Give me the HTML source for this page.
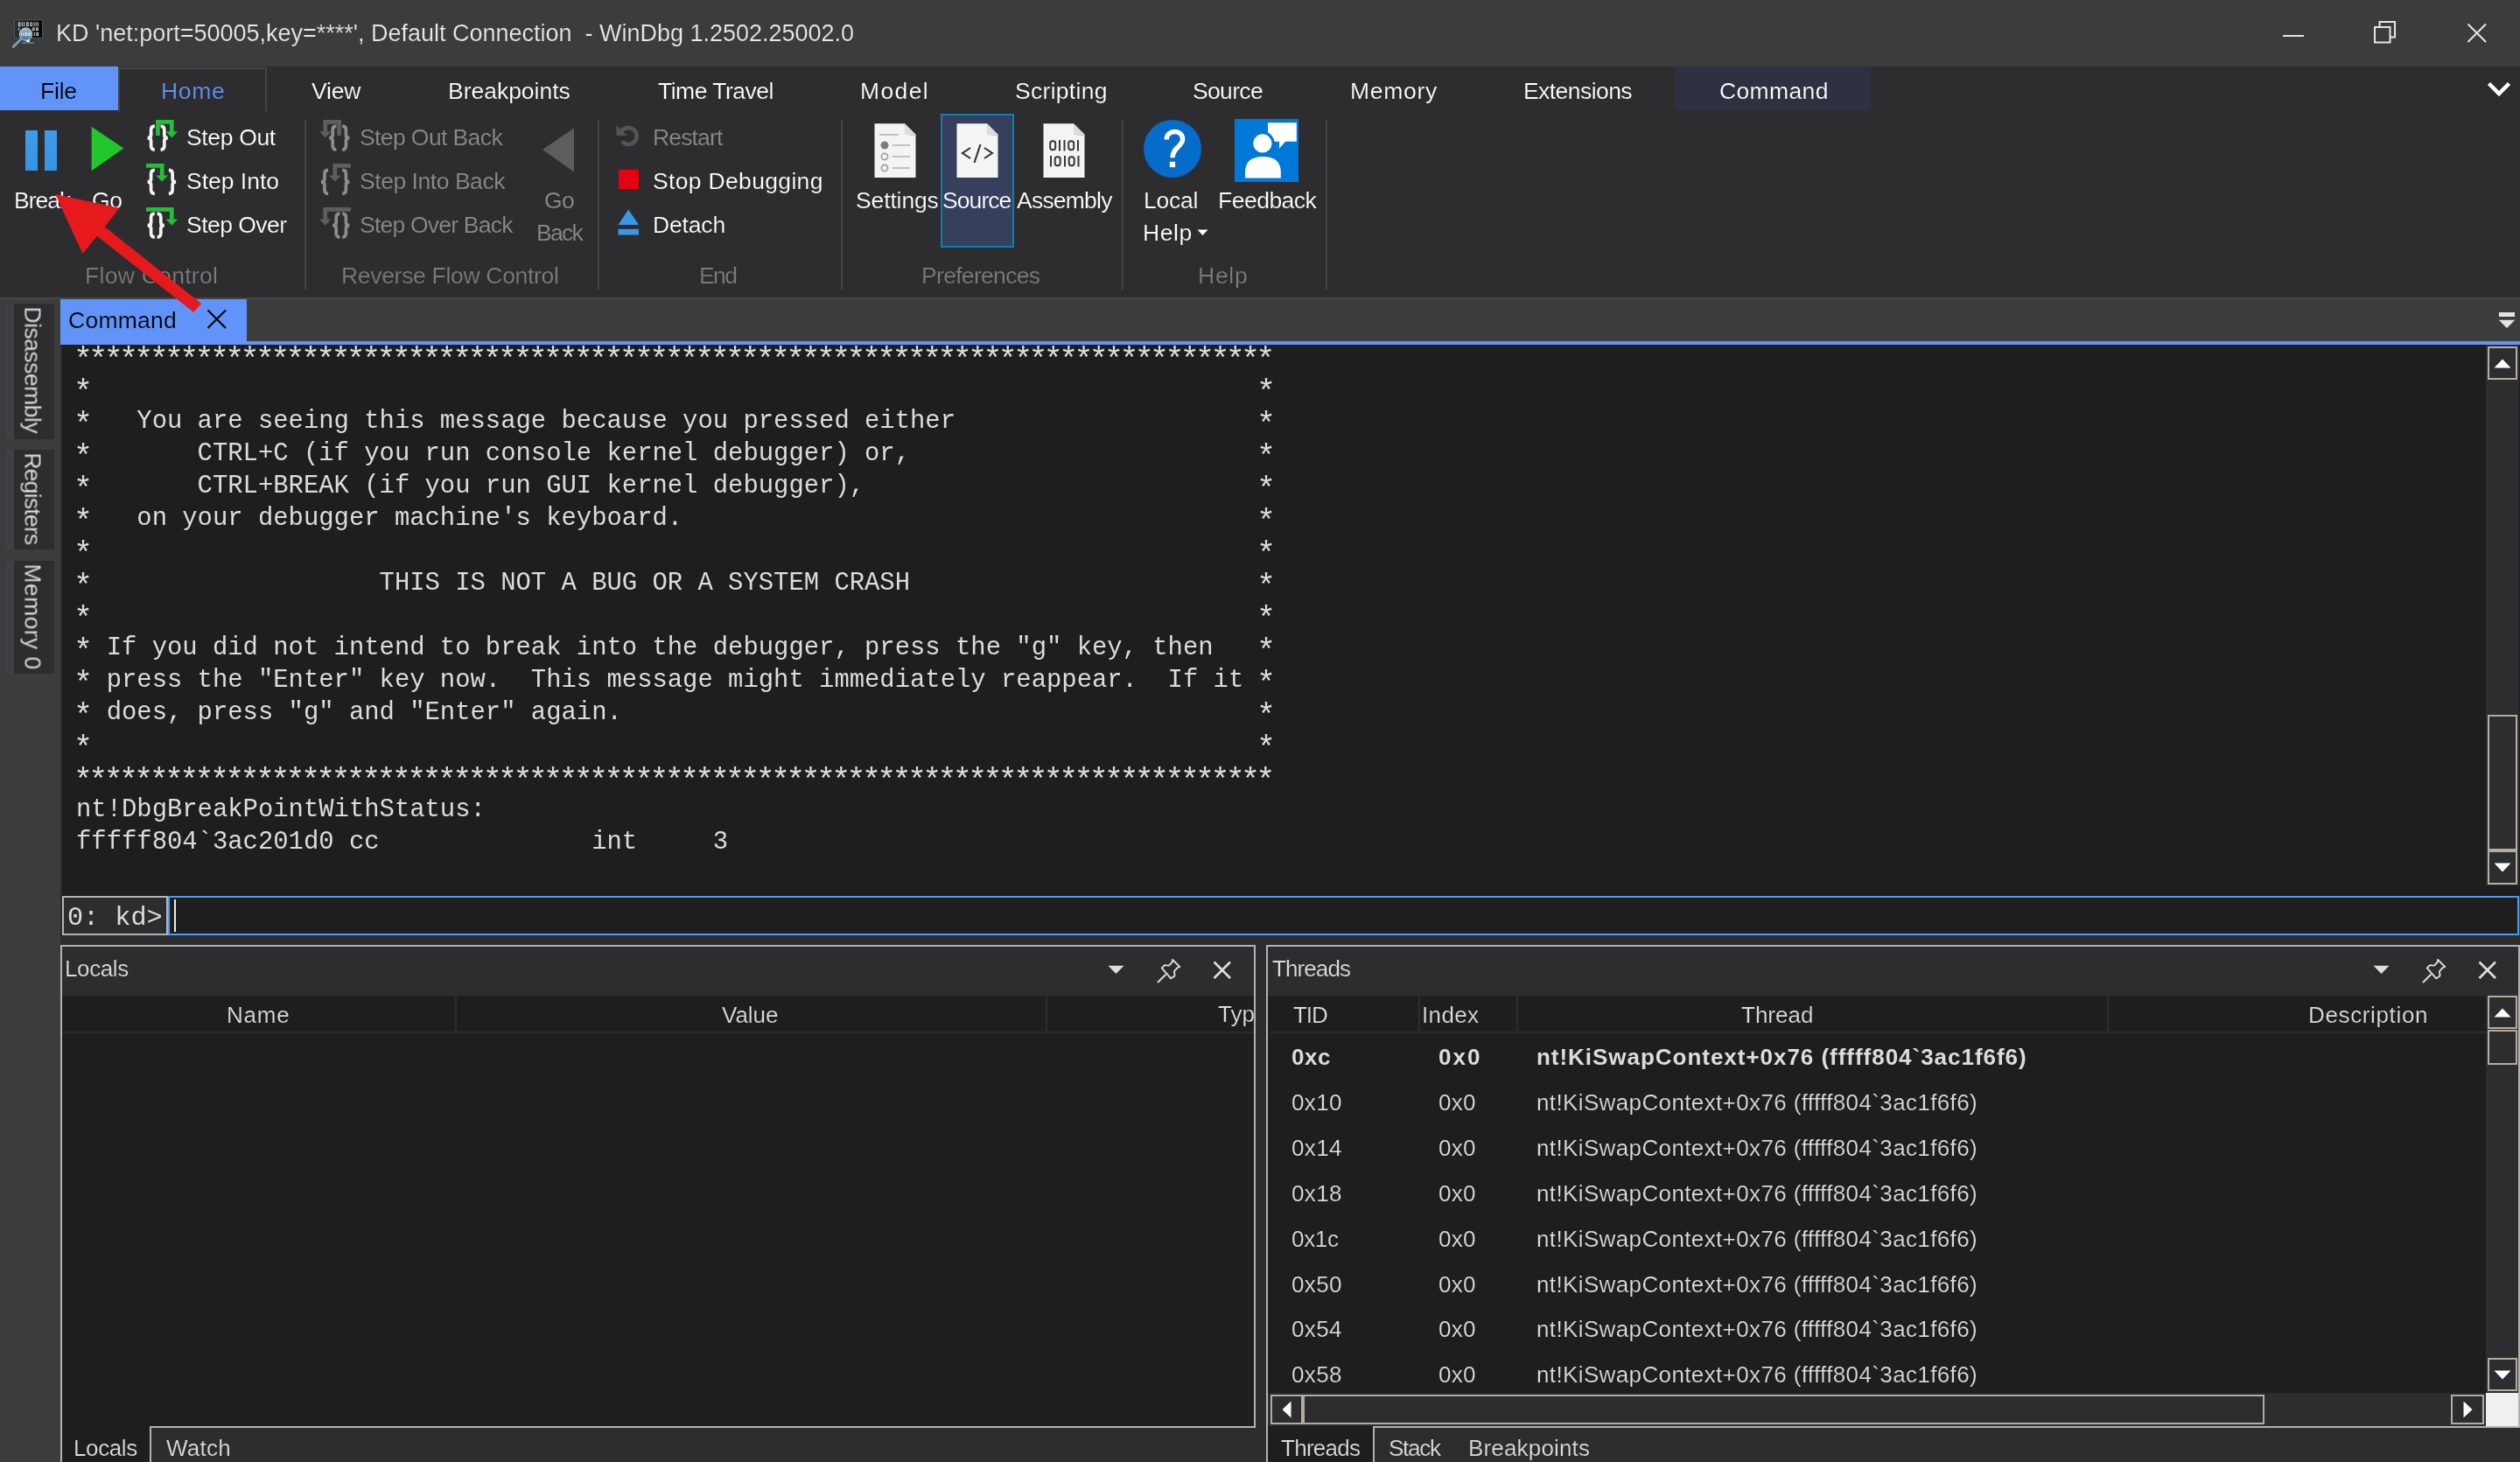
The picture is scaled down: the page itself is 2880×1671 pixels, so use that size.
<!DOCTYPE html>
<html><head><meta charset="utf-8"><title>WinDbg</title>
<style>
html,body{margin:0;padding:0;}
body{width:2880px;height:1671px;overflow:hidden;background:#3c3c3c;position:relative;font-family:"Liberation Sans",sans-serif;}
body div,body span,body svg{position:absolute;}
.t{white-space:pre;will-change:transform;}
.s{font-family:"Liberation Sans",sans-serif;}
.m{font-family:"Liberation Mono",monospace;}
</style></head><body>
<div style="left:0px;top:0px;width:2880px;height:76px;background:#3c3c3c;"></div>
<svg style="left:12px;top:20px;" width="40" height="36" viewBox="0 0 40 36"><defs><linearGradient id="mg" x1="0" x2="1"><stop offset="0" stop-color="#2e2e2e"/><stop offset="1" stop-color="#040404"/></linearGradient>
      <linearGradient id="lg" x1="0" y1="0" x2="0" y2="1"><stop offset="0" stop-color="#a9cbe6"/><stop offset="1" stop-color="#3f739b"/></linearGradient></defs>
      <rect x="4.4" y="2.8" width="32.2" height="20.6" fill="url(#mg)" stroke="#47535b" stroke-width="1.2"/>
      <g fill="none" stroke="#c2c2c2" stroke-width="1.1"><rect x="9.4" y="5.8" width="1.6" height="3.8"/><path d="M13.4 5.2 V10.2 M15.6 5.2 V10.2"/><rect x="18.6" y="5.8" width="1.6" height="3.8"/><rect x="22.6" y="5.8" width="2" height="3.8" rx="1"/><path d="M27 5.2 V10.2 M29.2 5.2 V10.2 M31.4 5.2 V10.2"/>
      <path d="M9.6 11.6 V15"/><rect x="25.4" y="12" width="1.8" height="2.6"/><rect x="29.6" y="12" width="1.8" height="2.6"/>
      <path d="M27.4 17 V21"/><rect x="29.8" y="17.6" width="1.8" height="2.8"/></g>
      <rect x="18" y="24.5" width="4" height="3.6" fill="#e6e6e6"/><rect x="13" y="28" width="14" height="2" fill="#5f6f7a"/>
      <circle cx="17.5" cy="19.1" r="7.2" fill="url(#lg)" fill-opacity=".92" stroke="#cdd7de" stroke-width="1"/>
      <g fill="none" stroke="#dfe8ef" stroke-width="1.1" opacity=".9"><path d="M12.6 17.4 V21 M14.6 17.4 V21"/><rect x="16.8" y="17.8" width="1.8" height="2.8"/><rect x="20.6" y="17.8" width="1.8" height="2.8"/></g>
      <path d="M11.2 25.4 L3.2 33.6" stroke="#7f9cb2" stroke-width="2.8" stroke-linecap="round"/></svg>
<span class="t s " style="left:63.9px;top:25.04px;font-size:27px;line-height:27px;color:#e8e8e8;letter-spacing:-0.005px;-webkit-text-stroke:0.2px #3c3c3c;">KD 'net:port=50005,key=****', Default Connection  - WinDbg 1.2502.25002.0</span>
<div style="left:2609px;top:40px;width:24px;height:2px;background:#e6e6e6;"></div>
<svg style="left:2712px;top:23px;" width="28" height="28" viewBox="0 0 28 28"><path d="M7.5 7.5 V2 H25 V19.5 H19.5" fill="none" stroke="#e6e6e6" stroke-width="2"/><rect x="2" y="8" width="17.5" height="17.5" fill="none" stroke="#e6e6e6" stroke-width="2"/></svg>
<svg style="left:2818px;top:25px;" width="26" height="26" viewBox="0 0 26 26"><path d="M2.5 2.5 L23 23 M23 2.5 L2.5 23" stroke="#e6e6e6" stroke-width="2" fill="none"/></svg>
<div style="left:0px;top:76px;width:2880px;height:264px;background:#2d2d30;"></div>
<div style="left:0px;top:340px;width:2880px;height:2px;background:#464647;"></div>
<div style="left:0px;top:76px;width:135px;height:50px;background:#6193f8;"></div>
<span class="t s " style="left:46.2px;top:90.87px;font-size:26.5px;line-height:26.5px;color:#000;letter-spacing:-0.221px;-webkit-text-stroke:0.2px #6193f8;">File</span>
<div style="left:136px;top:77px;width:169px;height:2px;background:#434346;"></div>
<div style="left:303px;top:77px;width:2px;height:51px;background:#434346;"></div>
<div style="left:135px;top:77px;width:2px;height:51px;background:#434346;"></div>
<span class="t s " style="left:184.4px;top:90.87px;font-size:26.5px;line-height:26.5px;color:#6193f8;letter-spacing:0.683px;-webkit-text-stroke:0.2px #2d2d30;">Home</span>
<span class="t s " style="left:356.4px;top:90.87px;font-size:26.5px;line-height:26.5px;color:#fff;letter-spacing:-0.207px;-webkit-text-stroke:0.2px #2d2d30;">View</span>
<span class="t s " style="left:512.3px;top:90.87px;font-size:26.5px;line-height:26.5px;color:#fff;letter-spacing:-0.019px;-webkit-text-stroke:0.2px #2d2d30;">Breakpoints</span>
<span class="t s " style="left:751.8px;top:90.87px;font-size:26.5px;line-height:26.5px;color:#fff;letter-spacing:-0.502px;-webkit-text-stroke:0.2px #2d2d30;">Time Travel</span>
<span class="t s " style="left:983.1px;top:90.87px;font-size:26.5px;line-height:26.5px;color:#fff;letter-spacing:1.378px;-webkit-text-stroke:0.2px #2d2d30;">Model</span>
<span class="t s " style="left:1159.5px;top:90.87px;font-size:26.5px;line-height:26.5px;color:#fff;letter-spacing:0.292px;-webkit-text-stroke:0.2px #2d2d30;">Scripting</span>
<span class="t s " style="left:1363.3px;top:90.87px;font-size:26.5px;line-height:26.5px;color:#fff;letter-spacing:-0.665px;-webkit-text-stroke:0.2px #2d2d30;">Source</span>
<span class="t s " style="left:1542.8px;top:90.87px;font-size:26.5px;line-height:26.5px;color:#fff;letter-spacing:0.710px;-webkit-text-stroke:0.2px #2d2d30;">Memory</span>
<span class="t s " style="left:1741.4px;top:90.87px;font-size:26.5px;line-height:26.5px;color:#fff;letter-spacing:-0.564px;-webkit-text-stroke:0.2px #2d2d30;">Extensions</span>
<div style="left:1915px;top:76px;width:223px;height:50px;background:#2e3142;"></div>
<span class="t s " style="left:1964.8px;top:90.87px;font-size:26.5px;line-height:26.5px;color:#fff;letter-spacing:0.367px;-webkit-text-stroke:0.2px #2e3142;">Command</span>
<svg style="left:2840px;top:90px;" width="32" height="24" viewBox="0 0 32 24"><path d="M4.5 5.5 L16 17 L27.5 5.5" fill="none" stroke="#fff" stroke-width="4.5"/></svg>
<div style="left:28.7px;top:149.3px;width:14.1px;height:45.5px;background:linear-gradient(#409ce8,#3693e2);"></div>
<div style="left:51px;top:149.3px;width:14.4px;height:45.5px;background:linear-gradient(#409ce8,#3693e2);"></div>
<span class="t s " style="left:15.8px;top:215.87px;font-size:26.5px;line-height:26.5px;color:#ffffff;letter-spacing:-0.994px;-webkit-text-stroke:0.2px #2d2d30;">Break</span>
<svg style="left:104px;top:144px;" width="38" height="52" viewBox="0 0 38 52"><path d="M0.6 0.8 L37.3 25.6 L0.6 51.2 Z" fill="#20c82a"/></svg>
<span class="t s " style="left:105px;top:215.87px;font-size:26.5px;line-height:26.5px;color:#ffffff;letter-spacing:-0.413px;-webkit-text-stroke:0.2px #2d2d30;">Go</span>
<svg style="left:166px;top:136px;filter:blur(0.5px);" width="38" height="38" viewBox="0 0 38 38"><path d="M10.799999999999999 8.1 q-4.2 0 -4.2 4.5 v5.6 q0 3.4 -4.0 3.4 q4.0 0 4.0 3.4 v5.6 q0 4.5 4.2 4.5" fill="none" stroke="#f4f4f4" stroke-width="3.7"/><path d="M17.6 8.1 q4.2 0 4.2 4.5 v5.6 q0 3.4 4.0 3.4 q-4.0 0 -4.0 3.4 v5.6 q0 4.5 -4.2 4.5" fill="none" stroke="#f4f4f4" stroke-width="3.7"/><path d="M14.4 19 V3.4 H30.3 V15" fill="none" stroke="#25bd3c" stroke-width="4.7"/><path d="M23.6 14.3 H37 L30.3 21.6 Z" fill="#25bd3c"/></svg>
<span class="t s " style="left:212.8px;top:143.87px;font-size:26.5px;line-height:26.5px;color:#ffffff;letter-spacing:-0.347px;-webkit-text-stroke:0.2px #2d2d30;">Step Out</span>
<svg style="left:166px;top:186px;filter:blur(0.5px);" width="38" height="38" viewBox="0 0 38 38"><path d="M10.799999999999999 8.3 q-4.2 0 -4.2 4.5 v5.6 q0 3.4 -4.0 3.4 q4.0 0 4.0 3.4 v5.6 q0 4.5 4.2 4.5" fill="none" stroke="#f4f4f4" stroke-width="3.7"/><path d="M26.900000000000002 8.3 q4.2 0 4.2 4.5 v5.6 q0 3.4 4.0 3.4 q-4.0 0 -4.0 3.4 v5.6 q0 4.5 -4.2 4.5" fill="none" stroke="#f4f4f4" stroke-width="3.7"/><path d="M1 3.4 H19.2 V15" fill="none" stroke="#25bd3c" stroke-width="4.7"/><path d="M12.2 14.5 H26.2 L19.2 21.6 Z" fill="#25bd3c"/></svg>
<span class="t s " style="left:212.8px;top:193.87px;font-size:26.5px;line-height:26.5px;color:#ffffff;letter-spacing:-0.005px;-webkit-text-stroke:0.2px #2d2d30;">Step Into</span>
<svg style="left:166px;top:236px;filter:blur(0.5px);" width="38" height="38" viewBox="0 0 38 38"><path d="M10.799999999999999 8.1 q-4.2 0 -4.2 4.5 v5.6 q0 3.4 -4.0 3.4 q4.0 0 4.0 3.4 v5.6 q0 4.5 4.2 4.5" fill="none" stroke="#f4f4f4" stroke-width="3.7"/><path d="M13.6 8.1 q4.2 0 4.2 4.5 v5.6 q0 3.4 4.0 3.4 q-4.0 0 -4.0 3.4 v5.6 q0 4.5 -4.2 4.5" fill="none" stroke="#f4f4f4" stroke-width="3.7"/><path d="M1 3.4 H30.3 V15" fill="none" stroke="#25bd3c" stroke-width="4.7"/><path d="M23.6 14.5 H37 L30.3 21.8 Z" fill="#25bd3c"/></svg>
<span class="t s " style="left:212.8px;top:243.87px;font-size:26.5px;line-height:26.5px;color:#ffffff;letter-spacing:-0.522px;-webkit-text-stroke:0.2px #2d2d30;">Step Over</span>
<span class="t s " style="left:96.7px;top:301.87px;font-size:26.5px;line-height:26.5px;color:#7b7b7b;letter-spacing:0.277px;-webkit-text-stroke:0.2px #2d2d30;">Flow Control</span>
<div style="left:348px;top:137px;width:2px;height:194px;background:#454548;"></div>
<svg style="left:364px;top:136px;filter:blur(0.5px);transform:scaleX(-1);" width="38" height="38" viewBox="0 0 38 38"><path d="M10.799999999999999 8.1 q-4.2 0 -4.2 4.5 v5.6 q0 3.4 -4.0 3.4 q4.0 0 4.0 3.4 v5.6 q0 4.5 4.2 4.5" fill="none" stroke="#8c8c8c" stroke-width="3.7"/><path d="M17.6 8.1 q4.2 0 4.2 4.5 v5.6 q0 3.4 4.0 3.4 q-4.0 0 -4.0 3.4 v5.6 q0 4.5 -4.2 4.5" fill="none" stroke="#8c8c8c" stroke-width="3.7"/><path d="M14.4 19 V3.4 H30.3 V15" fill="none" stroke="#5e5e5e" stroke-width="4.7"/><path d="M23.6 14.3 H37 L30.3 21.6 Z" fill="#5e5e5e"/></svg>
<span class="t s " style="left:410.8px;top:143.87px;font-size:26.5px;line-height:26.5px;color:#8b8b8b;letter-spacing:-0.601px;-webkit-text-stroke:0.2px #2d2d30;">Step Out Back</span>
<svg style="left:364px;top:186px;filter:blur(0.5px);transform:scaleX(-1);" width="38" height="38" viewBox="0 0 38 38"><path d="M10.799999999999999 8.3 q-4.2 0 -4.2 4.5 v5.6 q0 3.4 -4.0 3.4 q4.0 0 4.0 3.4 v5.6 q0 4.5 4.2 4.5" fill="none" stroke="#8c8c8c" stroke-width="3.7"/><path d="M26.900000000000002 8.3 q4.2 0 4.2 4.5 v5.6 q0 3.4 4.0 3.4 q-4.0 0 -4.0 3.4 v5.6 q0 4.5 -4.2 4.5" fill="none" stroke="#8c8c8c" stroke-width="3.7"/><path d="M1 3.4 H19.2 V15" fill="none" stroke="#5e5e5e" stroke-width="4.7"/><path d="M12.2 14.5 H26.2 L19.2 21.6 Z" fill="#5e5e5e"/></svg>
<span class="t s " style="left:410.8px;top:193.87px;font-size:26.5px;line-height:26.5px;color:#8b8b8b;letter-spacing:-0.454px;-webkit-text-stroke:0.2px #2d2d30;">Step Into Back</span>
<svg style="left:364px;top:236px;filter:blur(0.5px);transform:scaleX(-1);" width="38" height="38" viewBox="0 0 38 38"><path d="M10.799999999999999 8.1 q-4.2 0 -4.2 4.5 v5.6 q0 3.4 -4.0 3.4 q4.0 0 4.0 3.4 v5.6 q0 4.5 4.2 4.5" fill="none" stroke="#8c8c8c" stroke-width="3.7"/><path d="M13.6 8.1 q4.2 0 4.2 4.5 v5.6 q0 3.4 4.0 3.4 q-4.0 0 -4.0 3.4 v5.6 q0 4.5 -4.2 4.5" fill="none" stroke="#8c8c8c" stroke-width="3.7"/><path d="M1 3.4 H30.3 V15" fill="none" stroke="#5e5e5e" stroke-width="4.7"/><path d="M23.6 14.5 H37 L30.3 21.8 Z" fill="#5e5e5e"/></svg>
<span class="t s " style="left:410.8px;top:243.87px;font-size:26.5px;line-height:26.5px;color:#8b8b8b;letter-spacing:-0.779px;-webkit-text-stroke:0.2px #2d2d30;">Step Over Back</span>
<svg style="left:619px;top:146px;" width="38" height="51" viewBox="0 0 38 51"><path d="M37 0.5 L1 25 L37 50.5 Z" fill="#5d5d5d"/></svg>
<span class="t s " style="left:621.9px;top:215.87px;font-size:26.5px;line-height:26.5px;color:#8b8b8b;letter-spacing:-0.613px;-webkit-text-stroke:0.2px #2d2d30;">Go</span>
<span class="t s " style="left:612.7px;top:253.07px;font-size:26.5px;line-height:26.5px;color:#8b8b8b;letter-spacing:-1.754px;-webkit-text-stroke:0.2px #2d2d30;">Back</span>
<span class="t s " style="left:390.4px;top:301.87px;font-size:26.5px;line-height:26.5px;color:#7b7b7b;letter-spacing:-0.310px;-webkit-text-stroke:0.2px #2d2d30;">Reverse Flow Control</span>
<div style="left:683px;top:137px;width:2px;height:194px;background:#454548;"></div>
<svg style="left:703px;top:140px;" width="30" height="30" viewBox="0 0 30 30"><path d="M6.5 12 A9.5 9.5 0 1 1 8 21.5" fill="none" stroke="#545454" stroke-width="4.6"/><path d="M1.5 3 V15 H13.5 Z" fill="#545454"/></svg>
<span class="t s " style="left:745.5px;top:143.87px;font-size:26.5px;line-height:26.5px;color:#8b8b8b;letter-spacing:-0.842px;-webkit-text-stroke:0.2px #2d2d30;">Restart</span>
<div style="left:706.5px;top:193.6px;width:23.299999999999955px;height:22.80000000000001px;background:#e50012;"></div>
<span class="t s " style="left:746px;top:193.87px;font-size:26.5px;line-height:26.5px;color:#ffffff;letter-spacing:0.336px;-webkit-text-stroke:0.2px #2d2d30;">Stop Debugging</span>
<svg style="left:706px;top:240px;" width="26" height="30" viewBox="0 0 26 30"><path d="M12.2 -0.5 L24 17 H0.5 Z" fill="#3a98e8"/><rect x="0.5" y="21.8" width="23.4" height="6.7" fill="#3a98e8"/></svg>
<span class="t s " style="left:745.5px;top:243.87px;font-size:26.5px;line-height:26.5px;color:#ffffff;letter-spacing:-0.165px;-webkit-text-stroke:0.2px #2d2d30;">Detach</span>
<span class="t s " style="left:799px;top:301.87px;font-size:26.5px;line-height:26.5px;color:#7b7b7b;letter-spacing:-1.557px;-webkit-text-stroke:0.2px #2d2d30;">End</span>
<div style="left:961px;top:137px;width:2px;height:194px;background:#454548;"></div>
<div style="left:1075px;top:130px;width:84px;height:153px;background:#363f5c;box-sizing:border-box;border:2px solid #0e7fb6;"></div>
<svg style="left:999px;top:141px;filter:blur(0.45px);" width="48" height="62" viewBox="0 0 48 62"><path d="M0.5 0.3 H35 L47.5 12.8 V62 H0.5 Z" fill="#f4f4f4"/><path d="M35 0.3 V12.8 H47.5 Z" fill="#dcdcdc"/><path d="M35 12.8 H47.5 V15 Z" fill="#cfcfcf"/><circle cx="12" cy="25" r="4.5" fill="#7c7c7c"/><circle cx="12" cy="38" r="3.6" fill="none" stroke="#9a9a9a" stroke-width="1.6"/><circle cx="12" cy="51" r="3.6" fill="none" stroke="#9a9a9a" stroke-width="1.6"/>
      <path d="M6 13 H28 M21 25 H41 M21 38 H41 M21 51 H41" stroke="#b2b2b2" stroke-width="1.7"/></svg>
<svg style="left:1093px;top:141px;filter:blur(0.45px);" width="48" height="62" viewBox="0 0 48 62"><path d="M0.5 0.3 H35 L47.5 12.8 V62 H0.5 Z" fill="#f4f4f4"/><path d="M35 0.3 V12.8 H47.5 Z" fill="#dcdcdc"/><path d="M35 12.8 H47.5 V15 Z" fill="#cfcfcf"/><path d="M16 28 L7 34 L16 40 M32 28 L41 34 L32 40 M27.5 24 L20.5 45" fill="none" stroke="#303030" stroke-width="2.1"/></svg>
<svg style="left:1192px;top:141px;filter:blur(0.45px);" width="48" height="62" viewBox="0 0 48 62"><path d="M0.5 0.3 H35 L47.5 12.8 V62 H0.5 Z" fill="#f4f4f4"/><path d="M35 0.3 V12.8 H47.5 Z" fill="#dcdcdc"/><path d="M35 12.8 H47.5 V15 Z" fill="#cfcfcf"/><g fill="none" stroke="#383838" stroke-width="2"><rect x="8.2" y="20.2" width="6" height="10" rx="2.6"/><path d="M19 19 V31.5 M24.5 19 V31.5"/><rect x="29.2" y="20.2" width="6" height="10" rx="2.6"/><path d="M40 19 V31.5"/>
      <path d="M9 37 V49.5"/><rect x="13.7" y="38.2" width="6" height="10" rx="2.6"/><path d="M25 37 V49.5"/><rect x="29.7" y="38.2" width="6" height="10" rx="2.6"/><path d="M40.5 37 V49.5"/></g></svg>
<span class="t s " style="left:977.6px;top:216.07px;font-size:26.5px;line-height:26.5px;color:#ffffff;letter-spacing:-0.129px;-webkit-text-stroke:0.2px #2d2d30;">Settings</span>
<span class="t s " style="left:1077.4px;top:216.07px;font-size:26.5px;line-height:26.5px;color:#ffffff;letter-spacing:-0.925px;-webkit-text-stroke:0.2px #363f5c;">Source</span>
<span class="t s " style="left:1161.8px;top:216.07px;font-size:26.5px;line-height:26.5px;color:#ffffff;letter-spacing:-0.773px;-webkit-text-stroke:0.2px #2d2d30;">Assembly</span>
<span class="t s " style="left:1052.7px;top:301.87px;font-size:26.5px;line-height:26.5px;color:#7b7b7b;letter-spacing:-0.683px;-webkit-text-stroke:0.2px #2d2d30;">Preferences</span>
<div style="left:1282px;top:137px;width:2px;height:194px;background:#454548;"></div>
<svg style="left:1306px;top:136px;" width="68" height="68" viewBox="0 0 68 68"><circle cx="34" cy="34" r="33" fill="#066cc9"/><path d="M27.2 23.5 C27.2 11.5 45.6 11.5 45.6 23 C45.6 31.5 34 32.5 34 44.3" fill="none" stroke="#fff" stroke-width="5.4"/><rect x="30.8" y="48.8" width="6.3" height="6.3" fill="#fff"/></svg>
<span class="t s " style="left:1307px;top:216.07px;font-size:26.5px;line-height:26.5px;color:#ffffff;letter-spacing:-0.266px;-webkit-text-stroke:0.2px #2d2d30;">Local</span>
<span class="t s " style="left:1305.5px;top:253.27px;font-size:26.5px;line-height:26.5px;color:#ffffff;letter-spacing:0.546px;-webkit-text-stroke:0.2px #2d2d30;">Help</span>
<svg style="left:1368px;top:262px;" width="14" height="8" viewBox="0 0 14 8"><path d="M0.5 0.5 H12.5 L6.5 7 Z" fill="#fff"/></svg>
<svg style="left:1411px;top:136px;" width="73" height="72" viewBox="0 0 73 72"><rect width="73" height="72" fill="#0078d7"/>
      <path d="M38 4.2 H70.8 V25.7 H58 L51 33.8 V25.7 H38 Z" fill="#fff"/>
      <circle cx="31.9" cy="27.9" r="12.2" fill="#fff" stroke="#0078d7" stroke-width="3.2"/>
      <path d="M12 67.4 V61 Q12 43 32.4 43 Q52.8 43 52.8 61 V67.4 Z" fill="#fff"/></svg>
<span class="t s " style="left:1392.4px;top:216.07px;font-size:26.5px;line-height:26.5px;color:#ffffff;letter-spacing:-0.504px;-webkit-text-stroke:0.2px #2d2d30;">Feedback</span>
<span class="t s " style="left:1369px;top:301.87px;font-size:26.5px;line-height:26.5px;color:#7b7b7b;letter-spacing:0.746px;-webkit-text-stroke:0.2px #2d2d30;">Help</span>
<div style="left:1515px;top:137px;width:2px;height:194px;background:#454548;"></div>
<div style="left:7px;top:347px;width:9px;height:155px;background:#3f3f46;"></div>
<div style="left:16px;top:347px;width:46px;height:155px;background:#2d2d30;"></div>
<span class="t s" style="left:27.5px;top:328.07px;font-size:26.5px;line-height:26.5px;color:#e4e4e4;-webkit-text-stroke:0.2px #2d2d30;letter-spacing:-0.495px;transform-origin:0 22.43px;transform:rotate(90deg);">Disassembly</span>
<div style="left:7px;top:514px;width:9px;height:114px;background:#3f3f46;"></div>
<div style="left:16px;top:514px;width:46px;height:114px;background:#2d2d30;"></div>
<span class="t s" style="left:27.5px;top:494.82px;font-size:26.5px;line-height:26.5px;color:#e4e4e4;-webkit-text-stroke:0.2px #2d2d30;letter-spacing:-0.772px;transform-origin:0 22.43px;transform:rotate(90deg);">Registers</span>
<div style="left:7px;top:641px;width:9px;height:129px;background:#3f3f46;"></div>
<div style="left:16px;top:641px;width:46px;height:129px;background:#2d2d30;"></div>
<span class="t s" style="left:27.5px;top:622.07px;font-size:26.5px;line-height:26.5px;color:#e4e4e4;-webkit-text-stroke:0.2px #2d2d30;letter-spacing:0.420px;transform-origin:0 22.43px;transform:rotate(90deg);">Memory 0</span>
<div style="left:69px;top:342px;width:213px;height:48px;background:#6193f8;"></div>
<div style="left:69px;top:390px;width:2811px;height:4px;background:#6193f8;"></div>
<span class="t s " style="left:77.7px;top:353.27px;font-size:26.5px;line-height:26.5px;color:#000;letter-spacing:0.267px;-webkit-text-stroke:0.2px #6193f8;">Command</span>
<svg style="left:236px;top:353px;" width="24" height="24" viewBox="0 0 24 24"><path d="M1.5 1.5 L22 22 M22 1.5 L1.5 22" stroke="#000" stroke-width="2" fill="none"/></svg>
<div style="left:2856px;top:357px;width:18px;height:5px;background:#e4e4e4;"></div>
<svg style="left:2855px;top:365px;" width="20" height="11" viewBox="0 0 20 11"><path d="M0.8 0.8 H19.2 L10 10 Z" fill="#e4e4e4"/></svg>
<div style="left:69px;top:394px;width:2px;height:686px;background:#2d2d30;"></div>
<div style="left:71px;top:394px;width:2809px;height:630px;background:#1e1e1e;"></div>
<span class="t m" style="left:84.29px;top:393.66px;font-size:36.7px;line-height:36.7px;color:#dcdcdc;letter-spacing:-4.691px;">*******************************************************************************</span>
<span class="t m" style="left:84.29px;top:430.66px;font-size:36.7px;line-height:36.7px;color:#dcdcdc;">*</span>
<span class="t m" style="left:1436.26px;top:430.66px;font-size:36.7px;line-height:36.7px;color:#dcdcdc;">*</span>
<span class="t m " style="left:86.5px;top:430.56px;font-size:28.88px;line-height:28.88px;color:#dcdcdc;"> </span>
<span class="t m" style="left:84.29px;top:467.66px;font-size:36.7px;line-height:36.7px;color:#dcdcdc;">*</span>
<span class="t m" style="left:1436.26px;top:467.66px;font-size:36.7px;line-height:36.7px;color:#dcdcdc;">*</span>
<span class="t m " style="left:86.5px;top:467.56px;font-size:28.88px;line-height:28.88px;color:#dcdcdc;">    You are seeing this message because you pressed either</span>
<span class="t m" style="left:84.29px;top:504.66px;font-size:36.7px;line-height:36.7px;color:#dcdcdc;">*</span>
<span class="t m" style="left:1436.26px;top:504.66px;font-size:36.7px;line-height:36.7px;color:#dcdcdc;">*</span>
<span class="t m " style="left:86.5px;top:504.56px;font-size:28.88px;line-height:28.88px;color:#dcdcdc;">        CTRL+C (if you run console kernel debugger) or,</span>
<span class="t m" style="left:84.29px;top:541.66px;font-size:36.7px;line-height:36.7px;color:#dcdcdc;">*</span>
<span class="t m" style="left:1436.26px;top:541.66px;font-size:36.7px;line-height:36.7px;color:#dcdcdc;">*</span>
<span class="t m " style="left:86.5px;top:541.56px;font-size:28.88px;line-height:28.88px;color:#dcdcdc;">        CTRL+BREAK (if you run GUI kernel debugger),</span>
<span class="t m" style="left:84.29px;top:578.66px;font-size:36.7px;line-height:36.7px;color:#dcdcdc;">*</span>
<span class="t m" style="left:1436.26px;top:578.66px;font-size:36.7px;line-height:36.7px;color:#dcdcdc;">*</span>
<span class="t m " style="left:86.5px;top:578.56px;font-size:28.88px;line-height:28.88px;color:#dcdcdc;">    on your debugger machine's keyboard.</span>
<span class="t m" style="left:84.29px;top:615.66px;font-size:36.7px;line-height:36.7px;color:#dcdcdc;">*</span>
<span class="t m" style="left:1436.26px;top:615.66px;font-size:36.7px;line-height:36.7px;color:#dcdcdc;">*</span>
<span class="t m " style="left:86.5px;top:615.56px;font-size:28.88px;line-height:28.88px;color:#dcdcdc;"> </span>
<span class="t m" style="left:84.29px;top:652.66px;font-size:36.7px;line-height:36.7px;color:#dcdcdc;">*</span>
<span class="t m" style="left:1436.26px;top:652.66px;font-size:36.7px;line-height:36.7px;color:#dcdcdc;">*</span>
<span class="t m " style="left:86.5px;top:652.56px;font-size:28.88px;line-height:28.88px;color:#dcdcdc;">                    THIS IS NOT A BUG OR A SYSTEM CRASH</span>
<span class="t m" style="left:84.29px;top:689.66px;font-size:36.7px;line-height:36.7px;color:#dcdcdc;">*</span>
<span class="t m" style="left:1436.26px;top:689.66px;font-size:36.7px;line-height:36.7px;color:#dcdcdc;">*</span>
<span class="t m " style="left:86.5px;top:689.56px;font-size:28.88px;line-height:28.88px;color:#dcdcdc;"> </span>
<span class="t m" style="left:84.29px;top:726.66px;font-size:36.7px;line-height:36.7px;color:#dcdcdc;">*</span>
<span class="t m" style="left:1436.26px;top:726.66px;font-size:36.7px;line-height:36.7px;color:#dcdcdc;">*</span>
<span class="t m " style="left:86.5px;top:726.56px;font-size:28.88px;line-height:28.88px;color:#dcdcdc;">  If you did not intend to break into the debugger, press the "g" key, then</span>
<span class="t m" style="left:84.29px;top:763.66px;font-size:36.7px;line-height:36.7px;color:#dcdcdc;">*</span>
<span class="t m" style="left:1436.26px;top:763.66px;font-size:36.7px;line-height:36.7px;color:#dcdcdc;">*</span>
<span class="t m " style="left:86.5px;top:763.56px;font-size:28.88px;line-height:28.88px;color:#dcdcdc;">  press the "Enter" key now.  This message might immediately reappear.  If it</span>
<span class="t m" style="left:84.29px;top:800.66px;font-size:36.7px;line-height:36.7px;color:#dcdcdc;">*</span>
<span class="t m" style="left:1436.26px;top:800.66px;font-size:36.7px;line-height:36.7px;color:#dcdcdc;">*</span>
<span class="t m " style="left:86.5px;top:800.56px;font-size:28.88px;line-height:28.88px;color:#dcdcdc;">  does, press "g" and "Enter" again.</span>
<span class="t m" style="left:84.29px;top:837.66px;font-size:36.7px;line-height:36.7px;color:#dcdcdc;">*</span>
<span class="t m" style="left:1436.26px;top:837.66px;font-size:36.7px;line-height:36.7px;color:#dcdcdc;">*</span>
<span class="t m " style="left:86.5px;top:837.56px;font-size:28.88px;line-height:28.88px;color:#dcdcdc;"> </span>
<span class="t m" style="left:84.29px;top:874.66px;font-size:36.7px;line-height:36.7px;color:#dcdcdc;letter-spacing:-4.691px;">*******************************************************************************</span>
<span class="t m " style="left:86.5px;top:911.56px;font-size:28.88px;line-height:28.88px;color:#dcdcdc;">nt!DbgBreakPointWithStatus:</span>
<span class="t m " style="left:86.5px;top:948.56px;font-size:28.88px;line-height:28.88px;color:#dcdcdc;">fffff804`3ac201d0 cc              int     3</span>
<div style="left:2841px;top:394px;width:38px;height:618px;background:#2d2d30;"></div>
<div style="left:2843px;top:396px;width:34px;height:38px;background:#2d2d30;box-sizing:border-box;border:2px solid #b3ac9f;"></div>
<svg style="left:2850.0px;top:409.5px;" width="20" height="11" viewBox="0 0 20 11"><path d="M10 0.5 L19.5 10.5 H0.5 Z" fill="#fff"/></svg>
<div style="left:2843px;top:817px;width:34px;height:155px;background:#2d2d30;box-sizing:border-box;border:2px solid #b3ac9f;"></div>
<div style="left:2843px;top:972px;width:34px;height:39px;background:#2d2d30;box-sizing:border-box;border:2px solid #b3ac9f;"></div>
<svg style="left:2850.0px;top:986.0px;" width="20" height="11" viewBox="0 0 20 11"><path d="M10 10.5 L19.5 0.5 H0.5 Z" fill="#fff"/></svg>
<div style="left:71px;top:1024px;width:121px;height:45px;background:#2d2d30;box-sizing:border-box;border:2px solid #b4b4b7;"></div>
<span class="t m " style="left:76.7px;top:1034.45px;font-size:30.2px;line-height:30.2px;color:#dcdcdc;">0: kd&gt;</span>
<div style="left:192px;top:1024px;width:2687px;height:45px;background:#1e1e1e;box-sizing:border-box;border:2px solid #4b9bf0;"></div>
<div style="left:198.7px;top:1028px;width:2.3000000000000114px;height:37px;background:#ececec;"></div>
<div style="left:69px;top:1069px;width:2811px;height:11px;background:#2d2d30;"></div>
<div style="left:69px;top:1632px;width:2811px;height:39px;background:#2d2d30;"></div>
<div style="left:1435px;top:1080px;width:12px;height:591px;background:#2d2d30;"></div>
<div style="left:69px;top:1080px;width:1366px;height:552px;background:#b2b2b0;"></div>
<div style="left:71px;top:1082px;width:1362px;height:56px;background:#2d2d30;"></div>
<div style="left:71px;top:1138px;width:1362px;height:492px;background:#1e1e1e;"></div>
<span class="t s " style="left:74.2px;top:1093.69px;font-size:26px;line-height:26px;color:#dcdcdc;letter-spacing:-0.391px;-webkit-text-stroke:0.2px #2d2d30;">Locals</span>
<svg style="left:1266px;top:1103px;" width="20" height="11" viewBox="0 0 20 11"><path d="M0.5 0.8 H18.5 L9.5 10 Z" fill="#dedede"/></svg>
<svg style="left:1322px;top:1096px;" width="28" height="28" viewBox="0 0 28 28"><g fill="none" stroke="#dedede" stroke-width="2" stroke-linejoin="round">
      <path d="M17.5 1.5 L26 10 L23.5 11 L19.5 15.5 L20 21 L15.5 24 L4.5 11.5 L8 8 L13 8.5 L17 4.5 Z" transform="translate(1.5,-0.5) scale(0.95)"/>
      <path d="M10.5 17.5 L1 27"/></g></svg>
<svg style="left:1385px;top:1097px;" width="24" height="24" viewBox="0 0 24 24"><path d="M2.5 2.5 L21 21 M21 2.5 L2.5 21" stroke="#dedede" stroke-width="2.6" fill="none"/></svg>
<div style="left:71px;top:1179px;width:1362px;height:2px;background:#2d2d30;"></div>
<div style="left:520px;top:1138px;width:2px;height:41px;background:#2d2d30;"></div>
<div style="left:1195px;top:1138px;width:2px;height:41px;background:#2d2d30;"></div>
<span class="t s " style="left:259px;top:1146.89px;font-size:26px;line-height:26px;color:#dcdcdc;letter-spacing:0.802px;-webkit-text-stroke:0.2px #1e1e1e;">Name</span>
<span class="t s " style="left:825px;top:1146.89px;font-size:26px;line-height:26px;color:#dcdcdc;letter-spacing:-0.027px;-webkit-text-stroke:0.2px #1e1e1e;">Value</span>
<div style="left:1380px;top:1138px;width:53px;height:41px;overflow:hidden;"><span class="t s" style="left:12px;top:8.2px;font-size:26px;line-height:26px;color:#dcdcdc;-webkit-text-stroke:0.2px #1e1e1e;">Type</span></div>
<div style="left:69px;top:1632px;width:2px;height:39px;background:#b2b2b0;"></div>
<div style="left:71px;top:1630px;width:100px;height:41px;background:#1e1e1e;"></div>
<div style="left:171px;top:1632px;width:2px;height:39px;background:#b2b2b0;"></div>
<span class="t s " style="left:84.3px;top:1641.69px;font-size:26px;line-height:26px;color:#dcdcdc;letter-spacing:-0.391px;-webkit-text-stroke:0.2px #1e1e1e;">Locals</span>
<span class="t s " style="left:189.7px;top:1641.69px;font-size:26px;line-height:26px;color:#dcdcdc;letter-spacing:0.260px;-webkit-text-stroke:0.2px #2d2d30;">Watch</span>
<div style="left:1447px;top:1080px;width:1433px;height:552px;background:#b2b2b0;"></div>
<div style="left:1449px;top:1082px;width:1429px;height:56px;background:#2d2d30;"></div>
<div style="left:1449px;top:1138px;width:1429px;height:492px;background:#1e1e1e;"></div>
<span class="t s " style="left:1454px;top:1093.69px;font-size:26px;line-height:26px;color:#dcdcdc;letter-spacing:-0.897px;-webkit-text-stroke:0.2px #2d2d30;">Threads</span>
<svg style="left:2712px;top:1103px;" width="20" height="11" viewBox="0 0 20 11"><path d="M0.5 0.8 H18.5 L9.5 10 Z" fill="#dedede"/></svg>
<svg style="left:2768px;top:1096px;" width="28" height="28" viewBox="0 0 28 28"><g fill="none" stroke="#dedede" stroke-width="2" stroke-linejoin="round">
      <path d="M17.5 1.5 L26 10 L23.5 11 L19.5 15.5 L20 21 L15.5 24 L4.5 11.5 L8 8 L13 8.5 L17 4.5 Z" transform="translate(1.5,-0.5) scale(0.95)"/>
      <path d="M10.5 17.5 L1 27"/></g></svg>
<svg style="left:2831px;top:1097px;" width="24" height="24" viewBox="0 0 24 24"><path d="M2.5 2.5 L21 21 M21 2.5 L2.5 21" stroke="#dedede" stroke-width="2.6" fill="none"/></svg>
<div style="left:1452px;top:1179px;width:1389px;height:2px;background:#2d2d30;"></div>
<div style="left:1621px;top:1138px;width:2px;height:41px;background:#2d2d30;"></div>
<div style="left:1733px;top:1138px;width:2px;height:41px;background:#2d2d30;"></div>
<div style="left:2408px;top:1138px;width:2px;height:41px;background:#2d2d30;"></div>
<span class="t s " style="left:1478px;top:1146.89px;font-size:26px;line-height:26px;color:#dcdcdc;letter-spacing:-1.053px;-webkit-text-stroke:0.2px #1e1e1e;">TID</span>
<span class="t s " style="left:1625px;top:1146.89px;font-size:26px;line-height:26px;color:#dcdcdc;letter-spacing:0.349px;-webkit-text-stroke:0.2px #1e1e1e;">Index</span>
<span class="t s " style="left:1990px;top:1146.89px;font-size:26px;line-height:26px;color:#dcdcdc;letter-spacing:0.016px;-webkit-text-stroke:0.2px #1e1e1e;">Thread</span>
<span class="t s " style="left:2638px;top:1146.89px;font-size:26px;line-height:26px;color:#dcdcdc;letter-spacing:0.641px;-webkit-text-stroke:0.2px #1e1e1e;">Description</span>
<span class="t s " style="left:1475.5px;top:1195.09px;font-size:26px;line-height:26px;color:#dcdcdc;letter-spacing:0.540px;font-weight:700;">0xc</span>
<span class="t s " style="left:1643.5px;top:1195.09px;font-size:26px;line-height:26px;color:#dcdcdc;letter-spacing:2.040px;font-weight:700;">0x0</span>
<span class="t s " style="left:1755.5px;top:1195.09px;font-size:26px;line-height:26px;color:#dcdcdc;letter-spacing:0.970px;font-weight:700;">nt!KiSwapContext+0x76 (fffff804`3ac1f6f6)</span>
<span class="t s " style="left:1475.5px;top:1246.99px;font-size:26px;line-height:26px;color:#dcdcdc;letter-spacing:0.360px;-webkit-text-stroke:0.2px #1e1e1e;">0x10</span>
<span class="t s " style="left:1643.5px;top:1246.99px;font-size:26px;line-height:26px;color:#dcdcdc;letter-spacing:0.270px;-webkit-text-stroke:0.2px #1e1e1e;">0x0</span>
<span class="t s " style="left:1755.5px;top:1246.99px;font-size:26px;line-height:26px;color:#dcdcdc;letter-spacing:0.372px;-webkit-text-stroke:0.2px #1e1e1e;">nt!KiSwapContext+0x76 (fffff804`3ac1f6f6)</span>
<span class="t s " style="left:1475.5px;top:1298.89px;font-size:26px;line-height:26px;color:#dcdcdc;letter-spacing:0.360px;-webkit-text-stroke:0.2px #1e1e1e;">0x14</span>
<span class="t s " style="left:1643.5px;top:1298.89px;font-size:26px;line-height:26px;color:#dcdcdc;letter-spacing:0.270px;-webkit-text-stroke:0.2px #1e1e1e;">0x0</span>
<span class="t s " style="left:1755.5px;top:1298.89px;font-size:26px;line-height:26px;color:#dcdcdc;letter-spacing:0.372px;-webkit-text-stroke:0.2px #1e1e1e;">nt!KiSwapContext+0x76 (fffff804`3ac1f6f6)</span>
<span class="t s " style="left:1475.5px;top:1350.79px;font-size:26px;line-height:26px;color:#dcdcdc;letter-spacing:0.360px;-webkit-text-stroke:0.2px #1e1e1e;">0x18</span>
<span class="t s " style="left:1643.5px;top:1350.79px;font-size:26px;line-height:26px;color:#dcdcdc;letter-spacing:0.270px;-webkit-text-stroke:0.2px #1e1e1e;">0x0</span>
<span class="t s " style="left:1755.5px;top:1350.79px;font-size:26px;line-height:26px;color:#dcdcdc;letter-spacing:0.372px;-webkit-text-stroke:0.2px #1e1e1e;">nt!KiSwapContext+0x76 (fffff804`3ac1f6f6)</span>
<span class="t s " style="left:1475.5px;top:1402.69px;font-size:26px;line-height:26px;color:#dcdcdc;letter-spacing:-0.307px;-webkit-text-stroke:0.2px #1e1e1e;">0x1c</span>
<span class="t s " style="left:1643.5px;top:1402.69px;font-size:26px;line-height:26px;color:#dcdcdc;letter-spacing:0.270px;-webkit-text-stroke:0.2px #1e1e1e;">0x0</span>
<span class="t s " style="left:1755.5px;top:1402.69px;font-size:26px;line-height:26px;color:#dcdcdc;letter-spacing:0.372px;-webkit-text-stroke:0.2px #1e1e1e;">nt!KiSwapContext+0x76 (fffff804`3ac1f6f6)</span>
<span class="t s " style="left:1475.5px;top:1454.59px;font-size:26px;line-height:26px;color:#dcdcdc;letter-spacing:0.360px;-webkit-text-stroke:0.2px #1e1e1e;">0x50</span>
<span class="t s " style="left:1643.5px;top:1454.59px;font-size:26px;line-height:26px;color:#dcdcdc;letter-spacing:0.270px;-webkit-text-stroke:0.2px #1e1e1e;">0x0</span>
<span class="t s " style="left:1755.5px;top:1454.59px;font-size:26px;line-height:26px;color:#dcdcdc;letter-spacing:0.372px;-webkit-text-stroke:0.2px #1e1e1e;">nt!KiSwapContext+0x76 (fffff804`3ac1f6f6)</span>
<span class="t s " style="left:1475.5px;top:1506.49px;font-size:26px;line-height:26px;color:#dcdcdc;letter-spacing:0.360px;-webkit-text-stroke:0.2px #1e1e1e;">0x54</span>
<span class="t s " style="left:1643.5px;top:1506.49px;font-size:26px;line-height:26px;color:#dcdcdc;letter-spacing:0.270px;-webkit-text-stroke:0.2px #1e1e1e;">0x0</span>
<span class="t s " style="left:1755.5px;top:1506.49px;font-size:26px;line-height:26px;color:#dcdcdc;letter-spacing:0.372px;-webkit-text-stroke:0.2px #1e1e1e;">nt!KiSwapContext+0x76 (fffff804`3ac1f6f6)</span>
<span class="t s " style="left:1475.5px;top:1558.39px;font-size:26px;line-height:26px;color:#dcdcdc;letter-spacing:0.360px;-webkit-text-stroke:0.2px #1e1e1e;">0x58</span>
<span class="t s " style="left:1643.5px;top:1558.39px;font-size:26px;line-height:26px;color:#dcdcdc;letter-spacing:0.270px;-webkit-text-stroke:0.2px #1e1e1e;">0x0</span>
<span class="t s " style="left:1755.5px;top:1558.39px;font-size:26px;line-height:26px;color:#dcdcdc;letter-spacing:0.372px;-webkit-text-stroke:0.2px #1e1e1e;">nt!KiSwapContext+0x76 (fffff804`3ac1f6f6)</span>
<div style="left:2841px;top:1138px;width:37px;height:454px;background:#2d2d30;"></div>
<div style="left:2843px;top:1138px;width:34px;height:38px;background:#2d2d30;box-sizing:border-box;border:2px solid #b3ac9f;"></div>
<svg style="left:2850.0px;top:1151.5px;" width="20" height="11" viewBox="0 0 20 11"><path d="M10 0.5 L19.5 10.5 H0.5 Z" fill="#fff"/></svg>
<div style="left:2843px;top:1177px;width:34px;height:40px;background:#2d2d30;box-sizing:border-box;border:2px solid #b3ac9f;"></div>
<div style="left:2843px;top:1552px;width:34px;height:38px;background:#2d2d30;box-sizing:border-box;border:2px solid #b3ac9f;"></div>
<svg style="left:2850.0px;top:1565.5px;" width="20" height="11" viewBox="0 0 20 11"><path d="M10 10.5 L19.5 0.5 H0.5 Z" fill="#fff"/></svg>
<div style="left:1449px;top:1592px;width:1392px;height:38px;background:#2d2d30;"></div>
<div style="left:1452px;top:1594px;width:37px;height:34px;background:#2d2d30;box-sizing:border-box;border:2px solid #b3ac9f;"></div>
<svg style="left:1465.0px;top:1601.0px;" width="11" height="20" viewBox="0 0 11 20"><path d="M0.5 10 L10.5 0.5 V19.5 Z" fill="#fff"/></svg>
<div style="left:1489px;top:1594px;width:1099px;height:34px;background:#2d2d30;box-sizing:border-box;border:2px solid #b3ac9f;"></div>
<div style="left:2801px;top:1594px;width:38px;height:34px;background:#2d2d30;box-sizing:border-box;border:2px solid #b3ac9f;"></div>
<svg style="left:2814.5px;top:1601.0px;" width="11" height="20" viewBox="0 0 11 20"><path d="M10.5 10 L0.5 0.5 V19.5 Z" fill="#fff"/></svg>
<div style="left:2841px;top:1592px;width:37px;height:38px;background:#f0f0f0;"></div>
<div style="left:1447px;top:1632px;width:2px;height:39px;background:#b2b2b0;"></div>
<div style="left:1449px;top:1630px;width:120px;height:41px;background:#1e1e1e;"></div>
<div style="left:1569px;top:1632px;width:2px;height:39px;background:#b2b2b0;"></div>
<span class="t s " style="left:1464px;top:1641.69px;font-size:26px;line-height:26px;color:#dcdcdc;letter-spacing:-0.730px;-webkit-text-stroke:0.2px #1e1e1e;">Threads</span>
<span class="t s " style="left:1586.5px;top:1641.69px;font-size:26px;line-height:26px;color:#dcdcdc;letter-spacing:-1.256px;-webkit-text-stroke:0.2px #2d2d30;">Stack</span>
<span class="t s " style="left:1678px;top:1641.69px;font-size:26px;line-height:26px;color:#dcdcdc;letter-spacing:0.170px;-webkit-text-stroke:0.2px #2d2d30;">Breakpoints</span>
<svg style="left:50px;top:210px;" width="200" height="160" viewBox="0 0 200 160"><path d="M13.3 12.1 L86.5 27.8 L69.7 49.3 L180.1 137.1 L171.4 147 L60.9 59.8 L44.4 80.1 Z" fill="#e61a1c"/></svg>
</body></html>
